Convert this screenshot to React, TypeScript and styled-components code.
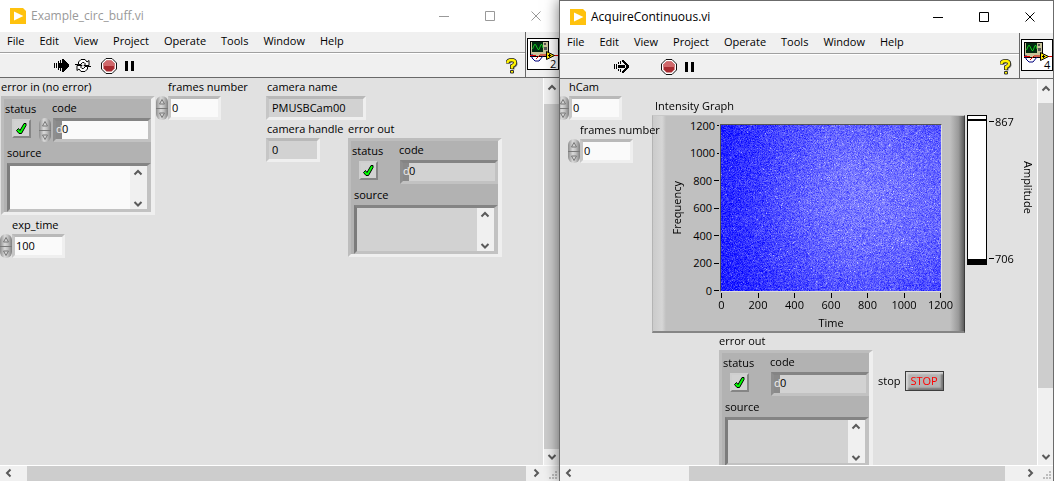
import React, { useId, useLayoutEffect, useRef } from "react";
import styled, { createGlobalStyle, css } from "styled-components";

const GlobalStyle = createGlobalStyle`
  * { box-sizing: border-box; }
  body {
    margin: 0;
    background: #e1e1e1;
    color: #000;
    font: 11px/16px "Open Sans", "Noto Sans", sans-serif;
  }
  button, input, textarea { font: inherit; color: inherit; margin: 0; padding: 0; border: 0; border-radius: 0; }
  button { background: none; }
  svg { display: block; }
`;

/* ---------- window chrome ---------- */

const Desktop = styled.main`
  display: grid;
  grid-template-columns: 559fr 495fr;
  height: 100vh;
  overflow: hidden;
`;

const WindowFrame = styled.section<{ $active?: boolean }>`
  display: flex;
  flex-direction: column;
  min-width: 0;
  min-height: 0;
  background: #f0f0f0;
  ${(p) =>
    p.$active &&
    css`
      position: relative;
      z-index: 1;
      border: 1px solid #6b6b6b;
      border-bottom: 0;
      box-shadow: 0 0 14px rgba(0, 0, 0, 0.55);
    `}
`;

const TitleBar = styled.header<{ $active?: boolean }>`
  display: flex;
  align-items: center;
  height: 32px;
  padding-left: 10px;
  background: #fff;
  color: ${(p) => (p.$active ? "#000" : "#999")};
`;

const Title = styled.h1`
  flex: 1;
  margin: 0 0 0 5px;
  font-size: 12px;
  font-weight: 400;
  white-space: nowrap;
`;

const CaptionButton = styled.button`
  display: grid;
  place-items: center;
  width: 46px;
  height: 32px;
`;

const Bars = styled.div`
  display: flex;
  height: 46px;
  border-bottom: 1px solid #696969;
`;

const BarStack = styled.div`
  flex: 1;
  min-width: 0;
`;

const MenuBar = styled.nav`
  display: flex;
  gap: 15px;
  height: 21px;
  padding-left: 7px;
  border-bottom: 1px solid #a0a0a0;
`;

const MenuButton = styled.button`
  height: 18px;
  white-space: nowrap;
`;

const ToolBar = styled.div`
  display: flex;
  align-items: center;
  height: 24px;
  padding: 0 7px 0 54px;
  border-top: 1px solid #fff;
`;

const ToolButton = styled.button<{ $gap?: number }>`
  margin-right: ${(p) => p.$gap ?? 0}px;
`;

const LoopSlot = styled.span`
  display: grid;
  place-items: center;
  width: 32px;
  padding-right: 4px;
`;

const Spacer = styled.span`
  flex: 1;
`;

const Connector = styled.div`
  width: 34px;
  padding: 6px 0 0 1px;
  border-left: 1px solid #696969;
`;

const Body = styled.div`
  flex: 1;
  display: flex;
  min-height: 0;
`;

const FrontPanel = styled.div`
  flex: 1;
  display: flex;
  align-items: flex-start;
  min-width: 0;
  overflow: hidden;
  background: #e1e1e1;
`;

const VScroll = styled.div`
  display: flex;
  flex-direction: column;
  width: 16px;
  border-left: 1px solid #fff;
`;

const HScroll = styled.div`
  display: flex;
  height: 16px;
  border-top: 1px solid #fff;
`;

const ScrollButton = styled.button<{ $w?: number; $h?: number }>`
  display: grid;
  place-items: center;
  width: ${(p) => p.$w ?? 15}px;
  height: ${(p) => p.$h ?? 14}px;
`;

const Track = styled.div<{ $grow: number }>`
  flex: ${(p) => p.$grow};
`;

const Thumb = styled(Track)`
  background: #cdcdcd;
`;

/* ---------- front panel controls ---------- */

const Column = styled.div<{ $width?: number; $gap?: number }>`
  display: flex;
  flex-direction: column;
  align-items: flex-start;
  flex: none;
  gap: ${(p) => p.$gap ?? 2}px;
  ${(p) => p.$width && `width: ${p.$width}px;`}
`;

const Row = styled.div`
  display: flex;
  align-items: flex-start;
`;

const PanelRow = styled(Row)`
  padding-top: 1px;
`;

const Group = styled.div<{ $left?: number }>`
  margin-left: ${(p) => p.$left ?? 0}px;
`;

const Caption = styled.label<{ $indent?: number }>`
  position: relative;
  z-index: 1;
  display: block;
  height: 17px;
  padding-left: ${(p) => p.$indent ?? 0}px;
  white-space: nowrap;
`;

const Field = styled.input<{ $width: number }>`
  width: ${(p) => p.$width}px;
  height: 24px;
  padding: 0 0 2px 1px;
  border: 3px solid;
  border-color: #b9b9b9 #efefef #efefef #c6c6c6;
  background: #fafafa;
  &:read-only { padding-left: 3px; background: #d2d2d2; }
`;

const SpinnerBox = styled.span`
  display: flex;
  flex-direction: column;
  flex: none;
  width: 12px;
  height: 24px;
  border-radius: 6px;
  overflow: hidden;
  background: linear-gradient(90deg, #8e8e8e, #dadada 40%, #c0c0c0 65%, #808080);
`;

const SpinnerButton = styled.button`
  display: grid;
  place-items: center;
  height: 12px;
  & + & { border-top: 1px solid #7a7a7a; }
`;

const Cluster = styled.fieldset`
  display: grid;
  grid-template-columns: 35px 14px 98px;
  grid-template-rows: 19px 24px 21px 49px;
  width: 154px;
  margin: 0;
  padding: 0;
  border: 3px solid;
  border-right-width: 4px;
  border-color: #bdbdbd #efefef #efefef #bdbdbd;
  background: #b2b2b2;
`;

const StatusLabel = styled.label`
  padding-left: 1px;
  line-height: 20px;
`;

const CodeLabel = styled.label`
  grid-column: 2 / -1;
  padding-left: 13px;
  line-height: 18px;
`;

const SourceLabel = styled.label`
  grid-column: 1 / -1;
  padding-left: 3px;
  line-height: 21px;
`;

const Status = styled.span`
  display: grid;
  width: 19px;
  height: 19px;
  margin: 1px 0 0 8px;
  border: 2px solid;
  border-color: #cfcfcf #858585 #858585 #cfcfcf;
  background: #d2d2d2;
  & > * { grid-area: 1 / 1; place-self: center; }
`;

const StatusInput = styled.input`
  appearance: none;
  width: 15px;
  height: 15px;
`;

const CodeBox = styled.span<{ $readonly?: boolean }>`
  grid-column: 3;
  display: flex;
  border: 3px solid;
  border-color: #848484 #c2c2c2 #c2c2c2 #8e8e8e;
  background: ${(p) => (p.$readonly ? "#d2d2d2" : "#fafafa")};
`;

const Radix = styled.span`
  width: 6px;
  background: #8a8a8a;
  color: #f0f0f0;
`;

const CodeInput = styled.input`
  width: 80px;
  padding-bottom: 2px;
  background: none;
`;

const Source = styled.div<{ $readonly?: boolean }>`
  grid-column: 1 / -1;
  display: flex;
  margin-left: 3px;
  border: 3px solid;
  border-right-width: 4px;
  border-color: #848484 #c2c2c2 #c2c2c2 #7c7c7c;
  background: ${(p) => (p.$readonly ? "#d2d2d2" : "#fafafa")};
`;

const SourceText = styled.textarea`
  flex: 1;
  min-width: 0;
  resize: none;
  overflow: hidden;
  background: none;
`;

const SourceScroll = styled.span`
  display: flex;
  flex-direction: column;
  justify-content: space-between;
  width: 17px;
  background: #f0f0f0;
`;

/* ---------- intensity graph ---------- */

const GraphGroup = styled.div`
  padding-top: 19px;
`;

const GraphFrame = styled.figure`
  display: grid;
  grid-template-columns: 11px 26px 30px 222px 1fr;
  grid-template-rows: 8px 168px 20px 1fr;
  width: 313px;
  height: 218px;
  margin: 0;
  border: solid;
  border-width: 1px 1px 2px;
  border-color: #c9c9c9 #3c3c3c #858585 #b4b4b4;
  background:
    linear-gradient(90deg, #c0c0c0, #9a9a9a 60%, #5c5c5c) right / 14px 100% no-repeat,
    linear-gradient(90deg, #cbcbcb, #d6d6d6 70%, #c0c0c0) left / 13px 100% no-repeat,
    #c0c0c0;
`;

const YTitle = styled.span`
  grid-area: 2 / 2;
  place-self: center;
  writing-mode: vertical-rl;
  rotate: 180deg;
`;

const YAxis = styled.div`
  grid-area: 2 / 3;
  display: flex;
  flex-direction: column;
  justify-content: space-between;
  padding: 1px 1px 1px 0;
`;

const YTick = styled.span`
  display: flex;
  align-items: center;
  justify-content: flex-end;
  gap: 2px;
  height: 1px;
  &::after { content: ""; width: 5px; height: 1px; background: #000; }
`;

const Plot = styled.canvas`
  grid-area: 2 / 4;
  width: 222px;
  height: 168px;
  border: 1px solid;
  border-color: #555 #dedede #dedede #555;
`;

const XAxis = styled.div`
  grid-area: 3 / 4;
  display: flex;
  justify-content: space-between;
  padding: 1px 1px 0;
`;

const XTick = styled.span`
  display: flex;
  flex-direction: column;
  align-items: center;
  width: 1px;
  line-height: 14px;
  &::before { content: ""; flex: none; width: 1px; height: 5px; background: #000; }
`;

const XTitle = styled.figcaption`
  grid-area: 4 / 4;
  padding-top: 3px;
  text-align: center;
`;

const Ramp = styled.div`
  width: 20px;
  height: 150px;
  margin-left: 2px;
  border: 1px solid #000;
  border-bottom-width: 6px;
  background: linear-gradient(#fff 3px, #000 3px 5px, #fff 5px);
`;

const RampScale = styled.div`
  display: flex;
  flex-direction: column;
  justify-content: space-between;
  height: 150px;
  padding: 6px 0 6px 2px;
`;

const RampTick = styled(YTick)`
  flex-direction: row-reverse;
  gap: 1px;
`;

const RampTitle = styled.span`
  margin: 46px 0 0 6px;
  writing-mode: vertical-rl;
`;

const StopGroup = styled.div`
  display: flex;
  align-items: center;
  gap: 4px;
  margin: 38px 0 0 5px;
`;

const StopButton = styled.button`
  width: 39px;
  height: 20px;
  border: 1px solid #3d3d3d;
  background: #b4b4b4;
  box-shadow: inset 2px 2px 2px #d8d8d8, inset -2px -2px 2px #777;
  color: #f00;
`;

/* ---------- icons ---------- */

const AppIcon = () => (
  <svg width="16" height="16" viewBox="0 0 16 16" aria-hidden="true">
    <path fill="#ffc20e" d="M0 0h13l3 3v13H0z" />
    <path fill="#fff" d="M4 3.6 13.4 8 4 12.4z" />
  </svg>
);

const RunIcon = ({ hollow }: { hollow?: boolean }) => (
  <svg width="15" height="13" viewBox="0 0 15 13" shapeRendering="crispEdges" aria-hidden="true">
    <path d="M0 4h1v5H0zM2 4h1v5H2zM4 2h1v2H4zM4 9h1v2H4zM6 1h1v3H6zM6 9h1v3H6z" />
    {hollow ? (
      <path d="M4 5h7v3H4zM8 0h2v1h1v1h1v1h1v1h1v1h1v3h-1v1h-1v1h-1v1h-1v1h-1v1H8v-2h1v-1h1V9h1V8h1V5h-1V4h-1V3H9V2H8z" />
    ) : (
      <path d="M4 4h4V0h2v1h1v1h1v1h1v1h1v1h1v3h-1v1h-1v1h-1v1h-1v1h-1v1H8V9H4z" />
    )}
  </svg>
);

const RunLoopIcon = () => (
  <svg width="16" height="15" viewBox="0 0 16 15" aria-hidden="true">
    <g fill="#fff" stroke="#000">
      <path d="M3.500 6.500V4L6 1.500h4L12 4l2-1.500v5H9L10.500 6 9 4.500H7.500L6 6v.5z" />
      <path d="M12.500 8.500V11L10 13.500H6L4 11l-2 1.500v-5h5L5.500 9 7 10.500h1.500L10 9v-.5z" />
    </g>
    <path fill="none" stroke="#000" d="M0 6.500h3.500M12.500 8.500H16" />
  </svg>
);

const AbortIcon = () => (
  <svg width="16" height="16" viewBox="0 0 16 16" aria-hidden="true">
    <path fill="#fff" stroke="#111" d="M5 .5h6L15.500 5v6L11 15.500H5L.5 11V5z" />
    <path fill="#a92b30" d="M5.500 2.500h5l3 3v5l-3 3h-5l-3-3v-5z" />
    <path fill="#d0686b" d="M5.500 2.500h5l3 3v2.500h-11V5.500z" />
  </svg>
);

const PauseIcon = () => (
  <svg width="9" height="10" viewBox="0 0 9 10" aria-hidden="true">
    <path d="M0 0h3v10H0zM6 0h3v10H6z" />
  </svg>
);

const HelpIcon = () => (
  <svg width="12" height="16" viewBox="0 0 12 16" aria-hidden="true">
    <g fill="none">
      <path stroke="#777" strokeWidth="3" d="M3 5.500Q3 3 6.500 3T10 6Q10 7.500 7 9v2.500" />
      <path stroke="#222" strokeWidth="4" d="M1.500 5.500Q1.500 2 5.500 2T9 5Q9 6.500 6 8v3" />
      <path stroke="#fff200" strokeWidth="2.400" d="M1.500 5Q1.500 2 5.500 2T9 5Q9 6.500 6 8v2.500" />
    </g>
    <path fill="#fff200" stroke="#333" d="M4.500 12.500h3v2.500h-3z" />
  </svg>
);

const ViIcon = ({ n }: { n: string }) => (
  <svg width="32" height="32" viewBox="0 0 32 32" role="img" aria-label={`VI icon ${n}`}>
    <rect x=".5" y=".5" width="31" height="31" fill="#fff" stroke="#000" />
    <g shapeRendering="crispEdges">
      <path fill="#000" d="M3 3h19v16H3z" />
      <path fill="#c9c49a" d="M4 4h17v14H4z" />
      <path fill="#002a10" d="M5 4h11v10H5z" />
      <path fill="#555" d="M17 5h2v2h-2zM17 9h3v3h-3z" />
    </g>
    <path fill="none" stroke="#14c61e" d="M5.500 11 7.500 6.500h1L11 11.500h1L14 6.500h1L16 10" />
    <path fill="none" stroke="#00007c" d="M5 16v4l3 3h4l4-5" />
    <path fill="none" stroke="#e00000" d="M3 17.500h6M9 21l4-4h6M27 17.500h4" />
    <path fill="#ffe600" stroke="#000" d="M19.500 13.500v8l8-4z" />
    <path fill="none" stroke="#000" d="M21 17.500h3M22.500 16v3" />
    <text x="23" y="30" fontSize="11">{n}</text>
  </svg>
);

const CheckIcon = () => (
  <svg width="13" height="13" viewBox="0 0 13 13" aria-hidden="true">
    <path fill="#0f0" stroke="#000" d="M1.500 8.500 3.500 6.500l1.500 2L9 1.500h2v2L6.500 11.500H4z" />
  </svg>
);

const chevrons = {
  up: "M1.500 6.500 5 3l3.500 3.500",
  down: "M1.500 3 5 6.500 8.500 3",
  left: "M6.500 1.500 3 5l3.500 3.500",
  right: "M3.500 1.500 7 5 3.500 8.500",
};

const Chevron = ({ to }: { to: keyof typeof chevrons }) => (
  <svg width="10" height="10" viewBox="0 0 10 10" aria-hidden="true">
    <path d={chevrons[to]} fill="none" stroke="#5a5a5a" strokeWidth="2" />
  </svg>
);

const Grip = () => (
  <svg width="15" height="14" viewBox="0 0 15 14" aria-hidden="true">
    <path fill="#bdbdbd" d="M11 5h2v2h-2zM8 8h2v2H8zM11 8h2v2h-2zM5 11h2v2H5zM8 11h2v2H8zM11 11h2v2h-2z" />
  </svg>
);

const SpinArrow = ({ down }: { down?: boolean }) => (
  <svg width="8" height="8" viewBox="0 0 8 8" aria-hidden="true">
    <path d={down ? "M1.500 2h5L4 6.500z" : "M1.500 6h5L4 1.500z"} fill="#d4d4d4" stroke="#777" />
  </svg>
);

const captionGlyphs = {
  Minimize: "M0 5.500h10",
  Maximize: "M.5.5h9v9h-9z",
  Close: "M.5.500l9 9M9.500.5l-9 9",
};

/* ---------- composed parts ---------- */

const Spinner = () => (
  <SpinnerBox>
    <SpinnerButton aria-label="Increment"><SpinArrow /></SpinnerButton>
    <SpinnerButton aria-label="Decrement"><SpinArrow down /></SpinnerButton>
  </SpinnerBox>
);

function NumericControl({ label, value, left }: { label: string; value: string; left?: number }) {
  const id = useId();
  return (
    <Group $left={left}>
      <Caption htmlFor={id} $indent={12}>{label}</Caption>
      <Row>
        <Spinner />
        <Field id={id} $width={53} defaultValue={value} />
      </Row>
    </Group>
  );
}

function Indicator({ label, value, width }: { label: string; value: string; width: number }) {
  const id = useId();
  return (
    <Group>
      <Caption htmlFor={id} $indent={1}>{label}</Caption>
      <Row><Field id={id} $width={width} readOnly value={value} /></Row>
    </Group>
  );
}

function ErrorCluster({ label, left, output }: { label: string; left?: number; output?: boolean }) {
  const id = useId();
  return (
    <Group $left={left}>
      <Caption as="div" id={`${id}n`}>{label}</Caption>
      <Cluster aria-labelledby={`${id}n`}>
        <StatusLabel htmlFor={`${id}s`}>status</StatusLabel>
        <CodeLabel htmlFor={`${id}c`}>code</CodeLabel>
        <Status>
          <StatusInput id={`${id}s`} type="checkbox" defaultChecked />
          <CheckIcon />
        </Status>
        {!output && <Spinner />}
        <CodeBox $readonly={output}>
          <Radix>d</Radix>
          <CodeInput id={`${id}c`} defaultValue="0" readOnly={output} />
        </CodeBox>
        <SourceLabel htmlFor={`${id}t`}>source</SourceLabel>
        <Source $readonly={output}>
          <SourceText id={`${id}t`} readOnly={output} />
          <SourceScroll>
            <ScrollButton aria-label="Scroll up"><Chevron to="up" /></ScrollButton>
            <ScrollButton aria-label="Scroll down" $h={10}><Chevron to="down" /></ScrollButton>
          </SourceScroll>
        </Source>
      </Cluster>
    </Group>
  );
}

const steps = [0, 200, 400, 600, 800, 1000, 1200];

function IntensityPlot() {
  const ref = useRef<HTMLCanvasElement>(null);
  useLayoutEffect(() => {
    const ctx = ref.current?.getContext("2d");
    if (!ctx) return;
    const w = 220;
    const h = 166;
    const image = ctx.createImageData(w, h);
    let seed = 7;
    const random = () => {
      seed = (seed * 1664525 + 1013904223) >>> 0;
      return seed / 4294967296;
    };
    for (let y = 0; y < h; y++) {
      for (let x = 0; x < w; x++) {
        const cx = x / w - 0.62;
        const dx = cx / (cx < 0 ? 0.5 : 0.85);
        const dy = (y / h - 0.42) / 0.85;
        const level = 16 + 104 * Math.exp(-(dx * dx + dy * dy));
        const noise = (random() + random() + random() - 1.5) * 46;
        const spark = random() > 0.98 ? 60 : 0;
        const v = Math.max(0, level + noise + spark);
        image.data.set([v, v, 255, 255], (y * w + x) * 4);
      }
    }
    ctx.putImageData(image, 0, 0);
  }, []);
  return <Plot ref={ref} width={220} height={166} role="img" aria-label="Intensity by time and frequency" />;
}

const IntensityGraph = () => (
  <GraphGroup>
    <Caption as="div" $indent={3}>Intensity Graph</Caption>
    <Row>
      <GraphFrame>
        <YTitle>Frequency</YTitle>
        <YAxis>{[...steps].reverse().map((s) => <YTick key={s}>{s}</YTick>)}</YAxis>
        <IntensityPlot />
        <XAxis>{steps.map((s) => <XTick key={s}>{s}</XTick>)}</XAxis>
        <XTitle>Time</XTitle>
      </GraphFrame>
      <Ramp />
      <RampScale><RampTick>867</RampTick><RampTick>706</RampTick></RampScale>
      <RampTitle>Amplitude</RampTitle>
    </Row>
  </GraphGroup>
);

const menus = ["File", "Edit", "View", "Project", "Operate", "Tools", "Window", "Help"];

interface ViWindowProps {
  title: string;
  icon: string;
  active?: boolean;
  vertical: [number, number, number];
  horizontal: [number, number, number];
  children: React.ReactNode;
}

function ViWindow({ title, icon, active, vertical, horizontal, children }: ViWindowProps) {
  return (
    <WindowFrame $active={active}>
      <TitleBar $active={active}>
        <AppIcon />
        <Title>{title}</Title>
        {Object.entries(captionGlyphs).map(([name, d]) => (
          <CaptionButton key={name} aria-label={name}>
            <svg width="10" height="10" viewBox="0 0 10 10"><path d={d} fill="none" stroke="currentColor" /></svg>
          </CaptionButton>
        ))}
      </TitleBar>
      <Bars>
        <BarStack>
          <MenuBar>{menus.map((m) => <MenuButton key={m}>{m}</MenuButton>)}</MenuBar>
          <ToolBar>
            <ToolButton aria-label="Run"><RunIcon hollow={active} /></ToolButton>
            <LoopSlot>{!active && <ToolButton aria-label="Run continuously"><RunLoopIcon /></ToolButton>}</LoopSlot>
            <ToolButton aria-label="Abort" $gap={8}><AbortIcon /></ToolButton>
            <ToolButton aria-label="Pause"><PauseIcon /></ToolButton>
            <Spacer />
            <ToolButton aria-label="Help"><HelpIcon /></ToolButton>
          </ToolBar>
        </BarStack>
        <Connector><ViIcon n={icon} /></Connector>
      </Bars>
      <Body>
        <FrontPanel>{children}</FrontPanel>
        <VScroll>
          <ScrollButton aria-label="Scroll up" $h={20}><Chevron to="up" /></ScrollButton>
          <Track $grow={vertical[0]} />
          <Thumb $grow={vertical[1]} />
          <Track $grow={vertical[2]} />
          <ScrollButton aria-label="Scroll down" $h={16}><Chevron to="down" /></ScrollButton>
        </VScroll>
      </Body>
      <HScroll>
        <ScrollButton aria-label="Scroll left" $w={17}><Chevron to="left" /></ScrollButton>
        <Track $grow={horizontal[0]} />
        <Thumb $grow={horizontal[1]} />
        <Track $grow={horizontal[2]} />
        <ScrollButton aria-label="Scroll right" $w={17}><Chevron to="right" /></ScrollButton>
        <Grip />
      </HScroll>
    </WindowFrame>
  );
}

export default function App() {
  return (
    <>
      <GlobalStyle />
      <Desktop>
        <ViWindow title="Example_circ_buff.vi" icon="2" vertical={[6, 345, 0]} horizontal={[10, 499, 1]}>
          <PanelRow>
            <Column $width={156}>
              <ErrorCluster label="error in (no error)" left={1} />
              <NumericControl label="exp_time" value="100" />
            </Column>
            <Column $width={110}>
              <NumericControl label="frames number" value="0" />
            </Column>
            <Column $gap={1}>
              <Indicator label="camera name" value="PMUSBCam00" width={100} />
              <Row>
                <Column $width={82}>
                  <Indicator label="camera handle" value="0" width={54} />
                </Column>
                <ErrorCluster label="error out" output />
              </Row>
            </Column>
          </PanelRow>
        </ViWindow>
        <ViWindow title="AcquireContinuous.vi" icon="4" active vertical={[4, 285, 61]} horizontal={[112, 316, 16]}>
          <Column $width={92}>
            <NumericControl label="hCam" value="0" left={-3} />
            <NumericControl label="frames number" value="0" left={8} />
          </Column>
          <Column $gap={0}>
            <IntensityGraph />
            <Row>
              <ErrorCluster label="error out" left={67} output />
              <StopGroup>
                <label htmlFor="stop">stop</label>
                <StopButton id="stop">STOP</StopButton>
              </StopGroup>
            </Row>
          </Column>
        </ViWindow>
      </Desktop>
    </>
  );
}
